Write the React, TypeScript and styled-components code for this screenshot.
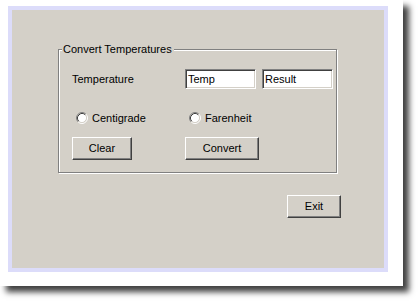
import React from "react";
import styled, { createGlobalStyle } from "styled-components";

const Global = createGlobalStyle`
  html, body { margin: 0; padding: 0; background: #ffffff; }
  body { min-height: 301px; font-family: "Liberation Sans", Arial, sans-serif; font-size: 11px; color: #000; }
`;

const Page = styled.div`
  width: 419px;
  height: 301px;
  overflow: hidden;
`;

const Card = styled.div`
  width: 403px;
  height: 286px;
  background: #ffffff;
  box-shadow: 6px 6px 6px rgba(0, 0, 0, 0.75);
  padding: 6px 0 0 8px;
  box-sizing: border-box;
`;

const Frame = styled.div`
  width: 380px;
  height: 266px;
  box-sizing: border-box;
  border: 4px solid #dcdcfa;
  background: #d4d0c8;
`;

const Panel = styled.div`
  display: flex;
  flex-direction: column;
  align-items: flex-start;
  padding: 39px 0 0 46px;
`;

const GroupBox = styled.div`
  position: relative;
  width: 279px;
  height: 124px;
  box-sizing: border-box;
  border: 1px solid #808080;
  box-shadow: 1px 1px 0 #ffffff, inset 1px 1px 0 #ffffff;
  padding: 19px 0 0 13px;
`;

const GroupTitle = styled.span`
  position: absolute;
  left: 3px;
  top: -7px;
  padding: 0 2px 0 1px;
  line-height: 13px;
  background: #d4d0c8;
`;

const Grid = styled.div`
  display: grid;
  grid-template-columns: 113px 77px 71px;
  grid-auto-rows: auto;
  align-items: center;
`;

const Label = styled.span`
  line-height: 13px;
`;

const TextBox = styled.div`
  width: 71px;
  height: 20px;
  box-sizing: border-box;
  background: #ffffff;
  border: 1px solid;
  border-color: #808080 #ffffff #ffffff #808080;
  box-shadow: inset 1px 1px 0 #404040, inset -1px -1px 0 #d4d0c8;
  padding: 0 0 0 2px;
  display: flex;
  align-items: center;
  line-height: 13px;
`;

const RadioRow = styled.label`
  display: flex;
  align-items: center;
  gap: 4px;
  height: 14px;
  padding-left: 4px;
  margin-top: 22px;
  line-height: 13px;
`;

const Button = styled.button<{ $w: number }>`
  width: ${(p) => p.$w}px;
  height: 23px;
  box-sizing: border-box;
  background: #d4d0c8;
  font-family: "Liberation Sans", Arial, sans-serif;
  font-size: 11px;
  color: #000;
  padding: 0;
  border: 1px solid;
  border-color: #ffffff #404040 #404040 #ffffff;
  box-shadow: inset -1px -1px 0 #808080;
  line-height: 13px;
`;

const ButtonCell = styled.div`
  margin-top: 12px;
  height: 23px;
`;

const ExitWrap = styled.div`
  margin: 22px 0 0 229px;
`;

const Radio = () => (
  <svg width="12" height="12" viewBox="0 0 12 12">
    <circle cx="6" cy="6" r="4.5" fill="#ffffff" />
    <path d="M2.11 9.89 A5.5 5.5 0 0 1 9.89 2.11" fill="none" stroke="#808080" strokeWidth="1" />
    <path d="M9.89 2.11 A5.5 5.5 0 0 1 2.11 9.89" fill="none" stroke="#ffffff" strokeWidth="1" />
    <path d="M2.82 9.18 A4.5 4.5 0 0 1 9.18 2.82" fill="none" stroke="#404040" strokeWidth="1" />
    <path d="M9.18 2.82 A4.5 4.5 0 0 1 2.82 9.18" fill="none" stroke="#d4d0c8" strokeWidth="1" />
  </svg>
);

export default function App() {
  return (
    <>
      <Global />
      <Page>
        <Card>
          <Frame>
            <Panel>
              <GroupBox>
                <GroupTitle>Convert Temperatures</GroupTitle>
                <Grid>
                  <Label>Temperature</Label>
                  <TextBox>Temp</TextBox>
                  <TextBox>Result</TextBox>
                  <RadioRow>
                    <Radio />
                    Centigrade
                  </RadioRow>
                  <RadioRow>
                    <Radio />
                    Farenheit
                  </RadioRow>
                  <span />
                  <ButtonCell>
                    <Button $w={60}>Clear</Button>
                  </ButtonCell>
                  <ButtonCell>
                    <Button $w={74}>Convert</Button>
                  </ButtonCell>
                  <span />
                </Grid>
              </GroupBox>
              <ExitWrap>
                <Button $w={54}>Exit</Button>
              </ExitWrap>
            </Panel>
          </Frame>
        </Card>
      </Page>
    </>
  );
}
